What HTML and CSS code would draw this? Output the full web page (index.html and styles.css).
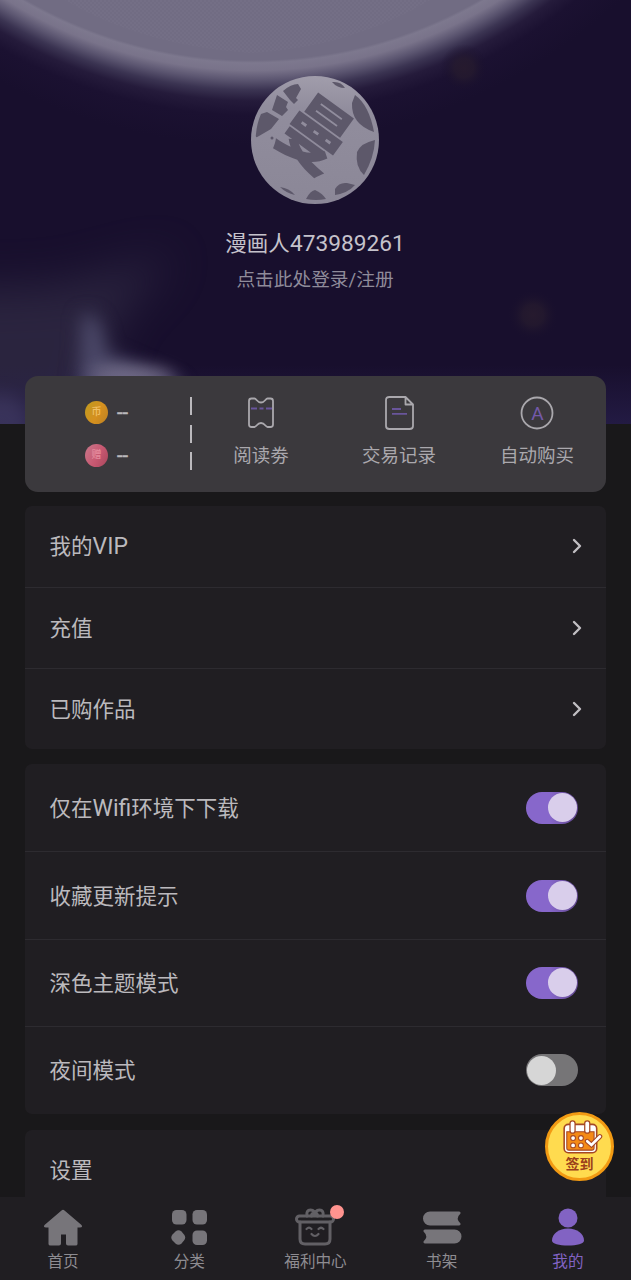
FILE: index.html
```html
<!DOCTYPE html>
<html lang="zh-CN">
<head>
<meta charset="utf-8">
<title>我的</title>
<link rel="stylesheet" href="styles.css">
</head>
<body>
<div class="app">
  <main class="content">
    <header class="hero">
      <svg class="hero-bg" viewBox="0 0 631 424" aria-hidden="true">
        <defs>
          <radialGradient id="moon" gradientUnits="userSpaceOnUse" cx="253" cy="-395" r="540">
            <stop offset="0" stop-color="#716c83"/>
            <stop offset=".843" stop-color="#716c83"/>
            <stop offset=".848" stop-color="#7d788e"/>
            <stop offset=".862" stop-color="#79738a"/>
            <stop offset=".88" stop-color="#5b5570"/>
            <stop offset=".898" stop-color="#3b3452"/>
            <stop offset=".918" stop-color="#251b3b"/>
            <stop offset=".945" stop-color="#1b1131"/>
            <stop offset="1" stop-color="#180f2d"/>
          </radialGradient>
          <linearGradient id="dusk" x1="0" y1="0" x2="0" y2="1">
            <stop offset="0" stop-color="#2a2252" stop-opacity="0"/>
            <stop offset="1" stop-color="#2a2252" stop-opacity=".6"/>
          </linearGradient>
          <radialGradient id="ember">
            <stop offset="0" stop-color="#261a2e"/>
            <stop offset=".4" stop-color="#251a2e" stop-opacity=".8"/>
            <stop offset="1" stop-color="#180f2d" stop-opacity="0"/>
          </radialGradient>
          <pattern id="grain" width="4" height="4" patternUnits="userSpaceOnUse">
            <path d="M0 1h2M2 3h2" stroke="#7e798e" stroke-width="1" opacity=".4"/>
          </pattern>
          <filter id="soft" x="-100%" y="-100%" width="300%" height="300%" color-interpolation-filters="sRGB"><feGaussianBlur stdDeviation="9"/></filter>
          <filter id="wide" x="-50%" y="-50%" width="200%" height="200%" color-interpolation-filters="sRGB"><feGaussianBlur stdDeviation="22"/></filter>
        </defs>
        <rect width="631" height="424" fill="url(#moon)"/>
        <path d="M65 0H430Q350 48 250 53Q140 45 65 0Z" fill="url(#grain)"/>
        <path d="M-60 290 60 285 175 255 115 320 85 440H-60Z" fill="#2e2842" opacity=".85" filter="url(#wide)"/>
        <path d="M82 315Q103 310 106 352L180 384 190 440H75Z" fill="#4b4868" filter="url(#soft)"/>
        <ellipse cx="132" cy="379" rx="44" ry="11" fill="#928ba2" opacity=".75" filter="url(#soft)"/>
        <circle cx="464" cy="68" r="24" fill="url(#ember)"/>
        <circle cx="533" cy="315" r="26" fill="url(#ember)"/>
        <rect y="365" width="631" height="59" fill="url(#dusk)"/>
        <ellipse cx="0" cy="425" rx="30" ry="30" fill="#49446d" opacity=".5" filter="url(#soft)"/>
      </svg>
      <div class="profile">
        <svg class="avatar" viewBox="0 0 128 128" role="img" aria-label="头像">
          <defs>
            <linearGradient id="face" x1=".5" y1="0" x2=".45" y2="1">
              <stop offset="0" stop-color="#a19dab"/>
              <stop offset=".25" stop-color="#918d9d"/>
              <stop offset="1" stop-color="#8b8797"/>
            </linearGradient>
          </defs>
          <circle cx="64" cy="64" r="64" fill="url(#face)"/>
          <g fill="#5d586a">
            <path d="M32 15Q40 8 47 8L50 13 45 22 47 24 43 28 39 24Z"/>
            <path d="M26 19 37 26 35 31 37 34 31 40 21 34Z"/>
            <path d="M10 38 16 36 28 43 20 53 8 60Q4 63 5 58Q6 47 10 38Z"/>
            <path d="M81 6Q90 5 94 12Q86 12 81 6Z"/>
            <path d="M104 19Q118 29 123 56Q100 48 101 27Z"/>
            <path d="M124 64Q123 82 113 99Q104 91 106 76Q110 67 124 64Z"/>
            <path d="M84 119V113Q88 106 96 107L104 109Q97 117 84 119Z"/>
            <path d="M55 123Q59 115 64 114Q71 117 75 123Q65 125 55 123Z"/>
            <path d="M29 111Q38 112 44 119Q35 117 29 111Z"/>
            <circle cx="21" cy="62" r="1.500"/>
          </g>
          <text class="avatar-mark" x="0" y="23" transform="translate(64 59) rotate(36) scale(1.020 1.220)" text-anchor="middle">曼</text>
        </svg>
        <h1 class="name">漫画人<span class="digits">473989261</span></h1>
        <p class="login">点击此处登录/注册</p>
      </div>
    </header>

    <section class="wallet">
      <div class="coins">
        <div class="coin-row"><span class="coin gold">币</span><span class="dash">--</span></div>
        <div class="coin-row"><span class="coin pink">赠</span><span class="dash">--</span></div>
      </div>
      <div class="divider"><i></i><i></i><i></i></div>
      <nav class="shortcuts">
        <a class="shortcut">
          <svg width="34" height="36" viewBox="0 0 34 36"><path d="M7.500 3.500h3c2 0 2.500 4 6.500 4s4.500-4 6.500-4h3c1.700 0 2.500 1 2.500 2.500v23.500c0 1.500-.8 2.500-2.500 2.500h-3c-2 0-2.500-4-6.500-4s-4.500 4-6.500 4h-3C5.800 32 5 31 5 29.500V6c0-1.500.8-2.500 2.500-2.500Z" class="line"/><path d="M7 13.500h6m2.500 0h4m2.500 0h6" class="accent"/></svg>
          <span>阅读劵</span>
        </a>
        <a class="shortcut">
          <svg width="34" height="36" viewBox="0 0 34 36"><path d="M23.500 2H7.500Q4 2 4 5v26q0 3 3.500 3h20q3.500 0 3.500-3V9.500L23.500 2v7.500H31" class="line"/><path d="M10 14h9M10 18.800h15" class="accent"/></svg>
          <span>交易记录</span>
        </a>
        <a class="shortcut">
          <svg width="34" height="36" viewBox="0 0 34 36"><circle cx="17" cy="18" r="15.500" class="line"/><text x="17.500" y="24.500" text-anchor="middle" class="auto">A</text></svg>
          <span>自动购买</span>
        </a>
      </nav>
    </section>

    <section class="group links">
      <a class="row"><span>我的<span class="latin">VIP</span></span><svg class="chevron" viewBox="0 0 12 16"><path d="M3 2 9 8 3 14"/></svg></a>
      <a class="row"><span>充值</span><svg class="chevron" viewBox="0 0 12 16"><path d="M3 2 9 8 3 14"/></svg></a>
      <a class="row"><span>已购作品</span><svg class="chevron" viewBox="0 0 12 16"><path d="M3 2 9 8 3 14"/></svg></a>
    </section>

    <section class="group toggles">
      <div class="row"><span>仅在<span class="latin">Wifi</span>环境下下载</span><span class="switch on"></span></div>
      <div class="row"><span>收藏更新提示</span><span class="switch on"></span></div>
      <div class="row"><span>深色主题模式</span><span class="switch on"></span></div>
      <div class="row"><span>夜间模式</span><span class="switch"></span></div>
    </section>

    <section class="group more">
      <a class="row"><span>设置</span></a>
    </section>
  </main>

  <a class="checkin">
    <svg width="42" height="36" viewBox="0 0 40 34">
      <rect x="3" y="5" width="31" height="27" rx="4" fill="#fff" stroke="#a54824" stroke-width="1.500"/>
      <path d="M5.500 12h26v15.500q0 2-2 2h-22q-2 0-2-2Z" fill="#f48a16" stroke="#a54824" stroke-width="1"/>
      <path d="M11 4v7M25 4v7" stroke="#a54824" stroke-width="6" stroke-linecap="round"/>
      <path d="M11 4v7M25 4v7" stroke="#fff" stroke-width="3.600" stroke-linecap="round"/>
      <g fill="#fff" stroke="#a54824" stroke-width="1"><circle cx="11.500" cy="18" r="2.300"/><circle cx="19" cy="18" r="2.300"/><circle cx="11.500" cy="25" r="2.300"/><circle cx="19" cy="25" r="2.300"/></g>
      <path d="m25 21 4 3.500 8-8" fill="none" stroke="#a54824" stroke-width="4.600" stroke-linecap="round"/>
      <path d="m25 21 4 3.500 8-8" fill="none" stroke="#fff" stroke-width="2.500" stroke-linecap="round"/>
    </svg>
    <span>签到</span>
  </a>

  <nav class="tabs">
    <a class="tab">
      <svg width="40" height="40" viewBox="0 0 40 40" fill="currentColor"><path d="M18.500 3.500q1.500-1.300 3 0L38.500 18q1.500 2.500-1.500 2.500h-2.500V37q0 1.500-2 1.500H25q-2 0-2-2V27.500h-5v9q0 2-2 2H7.500q-2 0-2-1.500V20.500H3Q0 20.500 1.500 18Z"/></svg>
      <span>首页</span>
    </a>
    <a class="tab">
      <svg width="40" height="40" viewBox="0 0 40 40" fill="currentColor"><rect x="3" y="3" width="14.500" height="14.500" rx="4.500"/><rect x="23.500" y="3" width="14.500" height="14.500" rx="4.500"/><rect x="23.500" y="23.500" width="14.500" height="14.500" rx="4.500"/><path d="M6.500 24.500q3-2.500 6 0l2.500 3q2.500 3 0 6l-2.500 3q-3 2.500-6 0l-3-3q-2.500-3 0-6Z"/></svg>
      <span>分类</span>
    </a>
    <a class="tab">
      <span class="icon-wrap">
        <svg width="42" height="40" viewBox="0 0 42 40" fill="none" stroke="currentColor" stroke-width="3" stroke-linecap="round"><rect x="2.500" y="9" width="37" height="6" rx="3"/><path d="M6 15v17q0 5 5 5h20q5 0 5-5V15M13 9Q12 3 16.500 3T21 8q0-5 4.500-5T29 9M17.500 9q0-3 3-3t3 3"/><path d="M12.500 22q2.500-2.500 5 0M24.500 22q2.500-2.500 5 0M17.500 27q3.500 4 7 0" stroke-width="2.200"/></svg>
        <i class="dot"></i>
      </span>
      <span>福利中心</span>
    </a>
    <a class="tab">
      <svg width="40" height="40" viewBox="0 0 40 40" fill="currentColor"><path d="M8 4.500h29q2 0 1.500 2Q33 11.500 38.500 16.500q.5 2-1.500 2H8a7 7 0 0 1 0-14ZM3 22.500h29.500a7 7 0 0 1 0 14H3q-2 0-1.500-2Q7 29.500 1.500 24.500q-.5-2 1.500-2Z"/></svg>
      <span>书架</span>
    </a>
    <a class="tab active">
      <svg width="40" height="40" viewBox="0 0 40 40" fill="currentColor"><circle cx="20" cy="11" r="9.500"/><path d="M20 21.500c9 0 16 5 16 12 0 3.500-7 5-16 5s-16-1.500-16-5c0-7 7-12 16-12Z"/></svg>
      <span>我的</span>
    </a>
  </nav>
</div>
</body>
</html>
```
FILE: styles.css
```css
* { box-sizing: border-box; }

body {
  margin: 0;
  background: #19181a;
  color: #bbb9bd;
  font-family: Roboto, "Noto Sans CJK SC", sans-serif;
}

h1, p { margin: 0; font-weight: 400; }
i { font-style: normal; }

.app {
  position: relative;
  display: flex;
  flex-direction: column;
  height: 1280px;
  overflow: hidden;
}

.content {
  flex: 1;
  min-height: 0;
  overflow: hidden;
}

.hero {
  position: relative;
  height: 424px;
  padding-top: 76px;
}

.hero-bg {
  position: absolute;
  inset: 0;
  width: 100%;
  height: 100%;
}

.profile {
  position: relative;
  display: flex;
  flex-direction: column;
  align-items: center;
  padding-right: 1px;
}

.avatar { width: 128px; height: 128px; overflow: visible; }

.avatar-mark {
  fill: #5d586a;
  font: 900 64px "Noto Sans CJK SC", sans-serif;
}

.name {
  margin-top: 24px;
  font-size: 21.500px;
  line-height: 32px;
  color: #c5c2cb;
}

.digits { font-size: 22.700px; }
.latin { font-size: 23px; }

.login {
  margin-top: 6px;
  font-size: 18.700px;
  line-height: 28px;
  color: #8f8b9a;
}

.wallet {
  position: relative;
  display: flex;
  align-items: center;
  height: 116px;
  margin: -48.500px 25px 0;
  border-radius: 13px;
  background: #3b393d;
}

.coins {
  display: flex;
  flex-direction: column;
  gap: 20px;
  width: 165px;
  padding-left: 60px;
}

.coin-row { display: flex; align-items: center; gap: 10px; height: 23px; }

.coin {
  display: grid;
  place-items: center;
  width: 23px;
  height: 23px;
  border-radius: 50%;
  font-size: 10px;
  font-weight: 500;
  line-height: 10px;
}

.gold {
  color: #f0c067;
  background: linear-gradient(120deg, #bf9b1f, #d5901f 55%, #bd8123);
}

.pink {
  color: #e58b9d;
  background: linear-gradient(120deg, #c9788b, #c75871 55%, #a8465c);
}

.dash {
  margin-left: -1px;
  font-size: 20px;
  line-height: 23px;
  -webkit-text-stroke: .4px;
}

.divider {
  display: flex;
  flex-direction: column;
  justify-content: space-between;
  width: 2px;
  height: 73px;
}

.divider i { height: 18px; background: #bbb9bd; }

.shortcuts {
  flex: 1;
  display: grid;
  grid-template-columns: repeat(3, 138px);
}

.shortcut {
  display: flex;
  flex-direction: column;
  align-items: center;
  gap: 11px;
  margin-top: -2px;
  font-size: 18.500px;
  line-height: 28px;
  color: #aaa8ad;
}

.line { fill: none; stroke: #aaa8ad; stroke-width: 1.800; stroke-linejoin: round; }
.accent { fill: none; stroke: #69559b; stroke-width: 1.800; }
.auto { font-size: 19px; fill: #7459a9; }

.group {
  margin: 15px 25px 0;
  border-radius: 7px;
  background: #201e22;
}

.row {
  display: flex;
  align-items: center;
  justify-content: space-between;
  padding: 0 23px 0 24.500px;
  font-size: 21.500px;
}

.row > span:first-child { line-height: 30px; padding-top: 2px; }
.row + .row { border-top: 1px solid #2d2b30; }
.links { margin-top: 14.500px; }
.links .row { height: 81px; padding-bottom: 1px; }
.toggles .row { height: 87.400px; padding-right: 28.500px; }
.more { margin-top: 16px; }
.more .row { height: 81px; }

.chevron {
  width: 12px;
  height: 16px;
  fill: none;
  stroke: #c0bec2;
  stroke-width: 2.400;
  stroke-linecap: round;
  stroke-linejoin: round;
}

.switch {
  display: flex;
  align-items: center;
  width: 52px;
  height: 32px;
  padding: 1px;
  border-radius: 16px;
  background: #767577;
}

.switch::before {
  content: "";
  width: 29px;
  height: 29px;
  border-radius: 50%;
  background: #d6d6d6;
}

.switch.on { justify-content: flex-end; background: linear-gradient(90deg, #8767cb 45%, #62488f); }
.switch.on::before { background: #d9ceeb; }

.checkin {
  position: absolute;
  left: 545px;
  top: 1112px;
  display: flex;
  flex-direction: column;
  align-items: center;
  width: 69px;
  height: 69px;
  padding-top: 7px;
  border: 3px solid #f29a13;
  border-radius: 50%;
  background: #ffdb4f;
  color: #9b401b;
  font-size: 14px;
  font-weight: 700;
  line-height: 16px;
}

.checkin svg { flex: none; margin: -3px 0 1px 5px; }

.tabs {
  display: grid;
  grid-template-columns: repeat(5, 1fr);
  height: 83px;
  padding-top: 10px;
  background: #201e22;
}

.tab {
  display: flex;
  flex-direction: column;
  align-items: center;
  gap: 4px;
  color: #77757a;
  font-size: 15.600px;
  line-height: 22px;
}

.tab > span:last-child { color: #8e8c91; }
.tab svg { display: block; }
.tab.active, .tab.active > span:last-child { color: #8263c3; }

.icon-wrap { position: relative; }
.icon-wrap svg { color: #626065; }

.dot {
  position: absolute;
  top: -2px;
  right: -8px;
  width: 14px;
  height: 14px;
  border-radius: 50%;
  background: #ff938f;
}
```
